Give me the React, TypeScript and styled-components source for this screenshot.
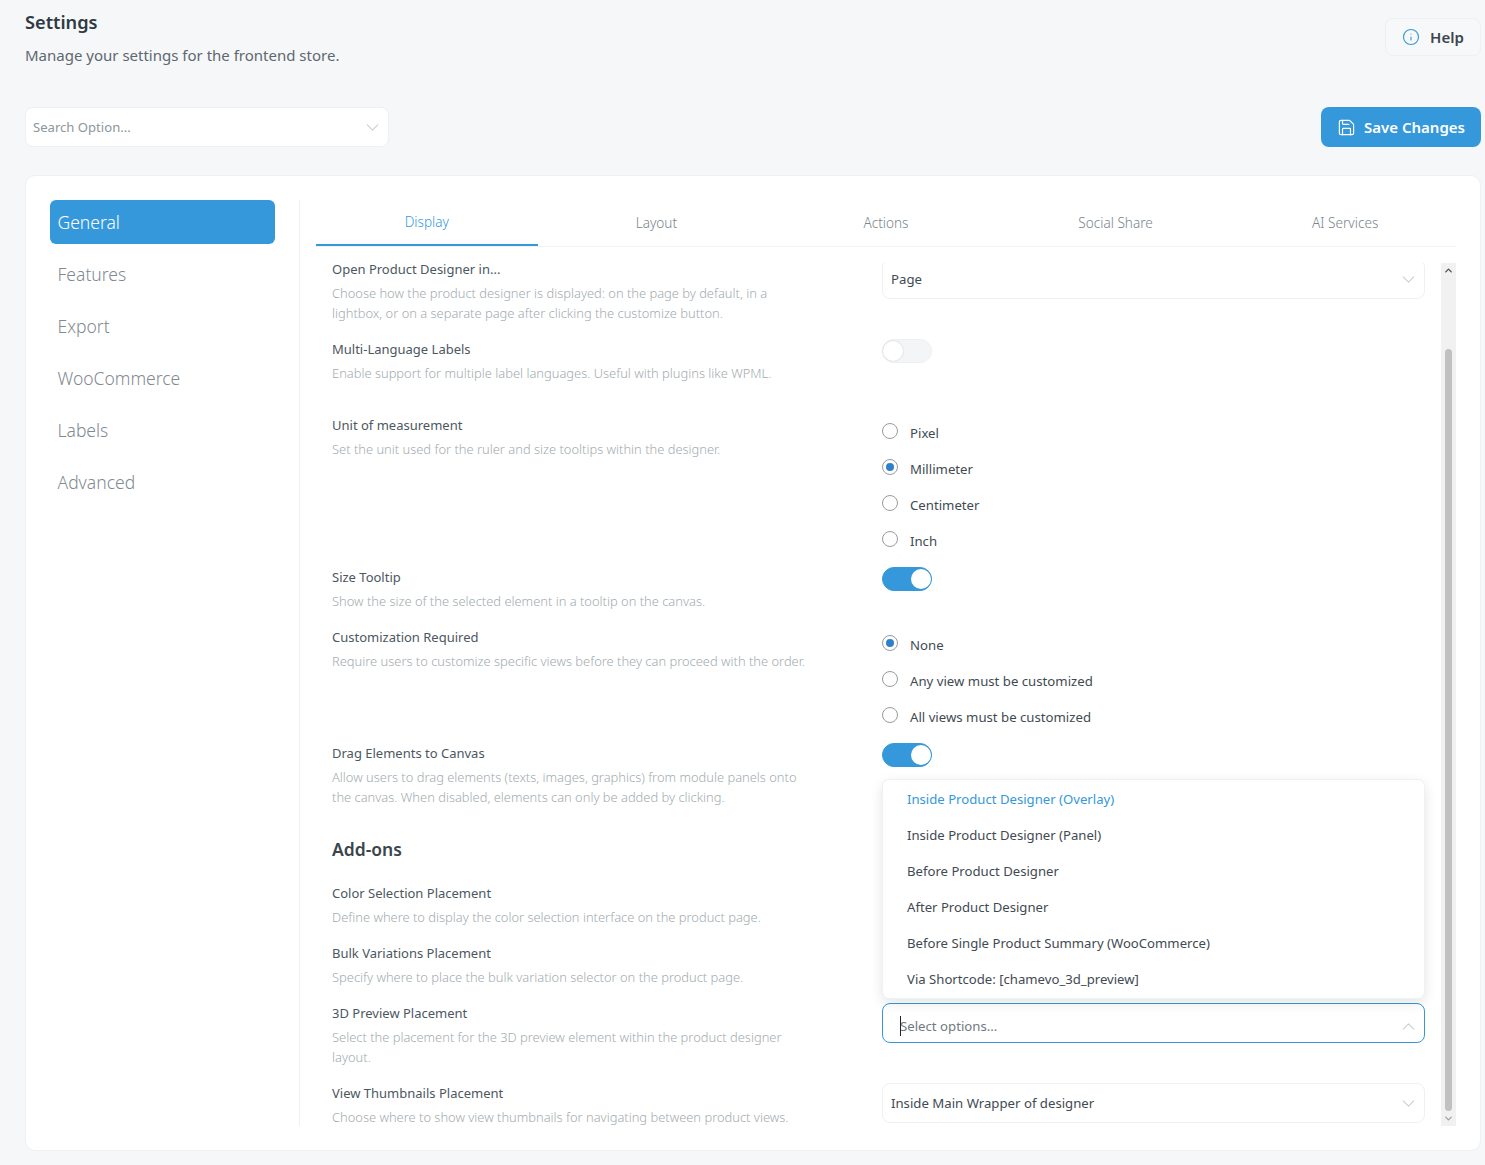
import React from "react";
import styled, { createGlobalStyle } from "styled-components";
import { ChevronDown, ChevronUp, Info, Save } from "lucide-react";

const Global = createGlobalStyle`
  html, body { margin: 0; padding: 0; background: #f6f7f9; }
  body { font-family: "Noto Sans", "Liberation Sans", sans-serif; color: #3f4a52; }
  * { box-sizing: border-box; }
`;

const Page = styled.div`
  width: 1485px;
  height: 1165px;
  padding: 0 4px 14px 25px;
  overflow: hidden;
  display: flex;
  flex-direction: column;
`;
const Header = styled.header`
  display: flex;
  justify-content: space-between;
  height: 107px;
`;
const Title = styled.h1`
  margin: 10px 0 0;
  font-size: 18.2px;
  line-height: 24px;
  font-weight: 600;
  color: #2f3a42;
`;
const Subtitle = styled.p`
  margin: 9px 0 0;
  font-size: 15px;
  line-height: 24px;
  color: #5d6870;
`;
const HelpButton = styled.button`
  margin-top: 18px;
  width: 96px;
  height: 38px;
  display: flex;
  align-items: center;
  justify-content: center;
  gap: 10px;
  padding: 0;
  font: 600 15px "Noto Sans", sans-serif;
  color: #3a454d;
  background: #f7f8fa;
  border: 1px solid #eef0f2;
  border-radius: 8px;
  svg { color: #3498db; }
`;
const Toolbar = styled.div`
  display: flex;
  justify-content: space-between;
  height: 68px;
`;
const SearchBox = styled.div`
  width: 364px;
  height: 40px;
  display: flex;
  align-items: center;
  justify-content: space-between;
  padding: 0 5px 0 7px;
  background: #fff;
  border: 1px solid #eef0f2;
  border-radius: 8px;
  font-size: 13.1px;
  color: #8d969c;
  svg { color: #c9d1d4; }
`;
const SaveButton = styled.button`
  width: 160px;
  height: 40px;
  display: flex;
  align-items: center;
  justify-content: center;
  gap: 8px;
  padding: 0;
  font: 600 15px "Noto Sans", sans-serif;
  color: #fff;
  background: #3498db;
  border: 0;
  border-radius: 8px;
`;
const Card = styled.main`
  height: 976px;
  display: flex;
  padding: 24px;
  background: #fff;
  border: 1px solid #eef0f2;
  border-radius: 10px;
`;
const Sidebar = styled.nav`
  width: 250px;
  flex: none;
  margin-right: 16px;
  padding-right: 24px;
  border-right: 1px solid #eef0f2;
  display: flex;
  flex-direction: column;
  gap: 8px;
`;
const NavItem = styled.div<{ $active?: boolean }>`
  height: 44px;
  line-height: 44px;
  padding-left: 7.5px;
  border-radius: 6px;
  font-size: 17.5px;
  font-weight: 300;
  color: ${(p) => (p.$active ? "#fff" : "#7f8a91")};
  background: ${(p) => (p.$active ? "#3498db" : "transparent")};
`;
const Main = styled.section`
  flex: 1;
  min-width: 0;
  display: flex;
  flex-direction: column;
`;
const Tabs = styled.div`
  height: 47px;
  flex: none;
  display: flex;
  gap: 8px;
  border-bottom: 1px solid #f1f2f4;
`;
const Tab = styled.div<{ $active?: boolean }>`
  flex: 1;
  height: 46px;
  line-height: ${(p) => (p.$active ? 44 : 46)}px;
  text-align: center;
  font-size: 13.6px;
  font-weight: 300;
  color: ${(p) => (p.$active ? "#3498db" : "#79848b")};
  border-bottom: 2px solid ${(p) => (p.$active ? "#3498db" : "transparent")};
`;
const Body = styled.div`
  margin-top: 12px;
  height: 868px;
  display: flex;
  overflow: hidden;
`;
const Scroller = styled.div`
  flex: 1;
  min-width: 0;
  padding: 0 16px;
  overflow: hidden;
`;
const Rows = styled.div`
  position: relative;
`;
const Row = styled.div<{ $h: number }>`
  display: grid;
  grid-template-columns: 550px 1fr;
  align-items: start;
  height: ${(p) => p.$h}px;
`;
const Text = styled.div`
  max-width: 478px;
`;
const Label = styled.div`
  font-size: 13px;
  line-height: 20px;
  margin-bottom: 4px;
  color: #4c575f;
`;
const Desc = styled.div`
  font-size: 12.9px;
  line-height: 20px;
  font-weight: 300;
  color: #a3abb0;
`;
const Heading = styled.h2`
  margin: 0;
  height: 60px;
  padding-top: 14px;
  font-size: 17.5px;
  line-height: 24px;
  font-weight: 600;
  color: #3a454d;
`;
const SelectBox = styled.div<{ $focus?: boolean; $clipped?: boolean }>`
  height: 40px;
  ${(p) => (p.$clipped ? "clip-path: inset(4px 0 0 0);" : "")}
  display: flex;
  align-items: center;
  justify-content: space-between;
  padding: ${(p) => (p.$focus ? "6px" : "0")} 5px 0 8px;
  background: #fff;
  border: 1px solid ${(p) => (p.$focus ? "#3498db" : "#eef0f2")};
  border-radius: 8px;
  font-size: 13.2px;
  color: #3f4a52;
  svg { color: #c9d1d4; }
`;
const Placeholder = styled.span`
  position: relative;
  padding-left: 9px;
  color: #6f7a82;
  &::before {
    content: "";
    position: absolute;
    left: 9px;
    top: -1px;
    bottom: -1px;
    width: 1px;
    background: #222;
  }
`;
const Toggle = styled.div<{ $on?: boolean }>`
  position: relative;
  width: 50px;
  height: 24px;
  border-radius: 12px;
  background: ${(p) => (p.$on ? "#3498db" : "#f4f5f7")};
  border: 1px solid ${(p) => (p.$on ? "#3498db" : "#eef0f2")};
  &::after {
    content: "";
    position: absolute;
    top: 1px;
    ${(p) => (p.$on ? "right: 0;" : "left: 0;")}
    width: 20px;
    height: 20px;
    border-radius: 50%;
    background: #fff;
    ${(p) => (p.$on ? "" : "box-shadow: 0 0 2px rgba(0, 0, 0, 0.18);")}
  }
`;
const RadioList = styled.div`
  display: flex;
  flex-direction: column;
`;
const RadioRow = styled.div`
  height: 36px;
  display: flex;
  gap: 12px;
  font-size: 13.2px;
  line-height: 36px;
  color: #3f4a52;
`;
const RadioMark = styled.span<{ $on?: boolean }>`
  position: relative;
  flex: none;
  width: 16px;
  height: 16px;
  margin-top: 8px;
  border: 1px solid #9a9a9a;
  border-radius: 50%;
  background: #fff;
  &::after {
    content: "";
    display: ${(p) => (p.$on ? "block" : "none")};
    position: absolute;
    inset: 3px;
    border-radius: 50%;
    background: #2f80c9;
  }
`;
const Menu = styled.div`
  position: absolute;
  left: 551px;
  right: 1px;
  top: 521px;
  height: 218px;
  padding: 1px 0;
  background: #fff;
  border-radius: 6px;
  box-shadow: 0 0 0 1px #f0f1f3, 0 4px 14px rgba(0, 0, 0, 0.12);
  z-index: 2;
`;
const MenuItem = styled.div<{ $active?: boolean }>`
  height: 36px;
  line-height: 36px;
  padding-left: 24px;
  font-size: 13.15px;
  color: ${(p) => (p.$active ? "#3498db" : "#3f4a52")};
`;
const Scrollbar = styled.div`
  width: 15px;
  flex: none;
  margin-top: 4px;
  display: flex;
  flex-direction: column;
  align-items: center;
  background: #f1f1f1;
`;
const ArrowSlot = styled.div<{ $dark?: boolean }>`
  height: 15px;
  flex: none;
  display: flex;
  align-items: center;
  justify-content: center;
  color: ${(p) => (p.$dark ? "#505050" : "#a3a3a3")};
`;
const Thumb = styled.div`
  width: 7px;
  height: 763px;
  margin-top: 71px;
  border-radius: 4px;
  background: #c1c1c1;
`;

const Item = ({ label, desc }: { label: string; desc: string }) => (
  <Text>
    <Label>{label}</Label>
    <Desc>{desc}</Desc>
  </Text>
);

const Radios = ({ items, on }: { items: string[]; on: string }) => (
  <RadioList>
    {items.map((i) => (
      <RadioRow key={i}>
        <RadioMark $on={i === on} />
        {i}
      </RadioRow>
    ))}
  </RadioList>
);

const Select = ({ value, clipped }: { value: string; clipped?: boolean }) => (
  <SelectBox $clipped={clipped}>
    {value}
    <ChevronDown size={21} strokeWidth={1.3} />
  </SelectBox>
);

const nav = ["General", "Features", "Export", "WooCommerce", "Labels", "Advanced"];
const tabs = ["Display", "Layout", "Actions", "Social Share", "AI Services"];
const menu = [
  "Inside Product Designer (Overlay)",
  "Inside Product Designer (Panel)",
  "Before Product Designer",
  "After Product Designer",
  "Before Single Product Summary (WooCommerce)",
  "Via Shortcode: [chamevo_3d_preview]",
];

export default function App() {
  return (
    <Page>
      <Global />
      <Header>
        <div>
          <Title>Settings</Title>
          <Subtitle>Manage your settings for the frontend store.</Subtitle>
        </div>
        <HelpButton>
          <Info size={18} strokeWidth={1.5} />
          Help
        </HelpButton>
      </Header>
      <Toolbar>
        <SearchBox>
          Search Option...
          <ChevronDown size={21} strokeWidth={1.3} />
        </SearchBox>
        <SaveButton>
          <Save size={19} strokeWidth={1.5} />
          Save Changes
        </SaveButton>
      </Toolbar>
      <Card>
        <Sidebar>
          {nav.map((n, i) => (
            <NavItem key={n} $active={i === 0}>{n}</NavItem>
          ))}
        </Sidebar>
        <Main>
          <Tabs>
            {tabs.map((t, i) => (
              <Tab key={t} $active={i === 0}>{t}</Tab>
            ))}
          </Tabs>
          <Body>
            <Scroller>
              <Rows>
                <Row $h={80}>
                  <Item label="Open Product Designer in..." desc="Choose how the product designer is displayed: on the page by default, in a lightbox, or on a separate page after clicking the customize button." />
                  <Select clipped value="Page" />
                </Row>
                <Row $h={76}>
                  <Item label="Multi-Language Labels" desc="Enable support for multiple label languages. Useful with plugins like WPML." />
                  <Toggle />
                </Row>
                <Row $h={152}>
                  <Item label="Unit of measurement" desc="Set the unit used for the ruler and size tooltips within the designer." />
                  <Radios items={["Pixel", "Millimeter", "Centimeter", "Inch"]} on="Millimeter" />
                </Row>
                <Row $h={60}>
                  <Item label="Size Tooltip" desc="Show the size of the selected element in a tooltip on the canvas." />
                  <Toggle $on />
                </Row>
                <Row $h={116}>
                  <Item label="Customization Required" desc="Require users to customize specific views before they can proceed with the order." />
                  <Radios items={["None", "Any view must be customized", "All views must be customized"]} on="None" />
                </Row>
                <Row $h={80}>
                  <Item label="Drag Elements to Canvas" desc="Allow users to drag elements (texts, images, graphics) from module panels onto the canvas. When disabled, elements can only be added by clicking." />
                  <Toggle $on />
                </Row>
                <Heading>Add-ons</Heading>
                <Row $h={60}>
                  <Item label="Color Selection Placement" desc="Define where to display the color selection interface on the product page." />
                </Row>
                <Row $h={60}>
                  <Item label="Bulk Variations Placement" desc="Specify where to place the bulk variation selector on the product page." />
                </Row>
                <Row $h={80}>
                  <Item label="3D Preview Placement" desc="Select the placement for the 3D preview element within the product designer layout." />
                  <SelectBox $focus>
                    <Placeholder>Select options...</Placeholder>
                    <ChevronUp size={21} strokeWidth={1.3} />
                  </SelectBox>
                </Row>
                <Row $h={80}>
                  <Item label="View Thumbnails Placement" desc="Choose where to show view thumbnails for navigating between product views." />
                  <Select value="Inside Main Wrapper of designer" />
                </Row>
                <Menu>
                  {menu.map((m, i) => (
                    <MenuItem key={m} $active={i === 0}>{m}</MenuItem>
                  ))}
                </Menu>
              </Rows>
            </Scroller>
            <Scrollbar>
              <ArrowSlot $dark><ChevronUp size={11} strokeWidth={3} /></ArrowSlot>
              <Thumb />
              <ArrowSlot><ChevronDown size={11} strokeWidth={3} /></ArrowSlot>
            </Scrollbar>
          </Body>
        </Main>
      </Card>
    </Page>
  );
}
